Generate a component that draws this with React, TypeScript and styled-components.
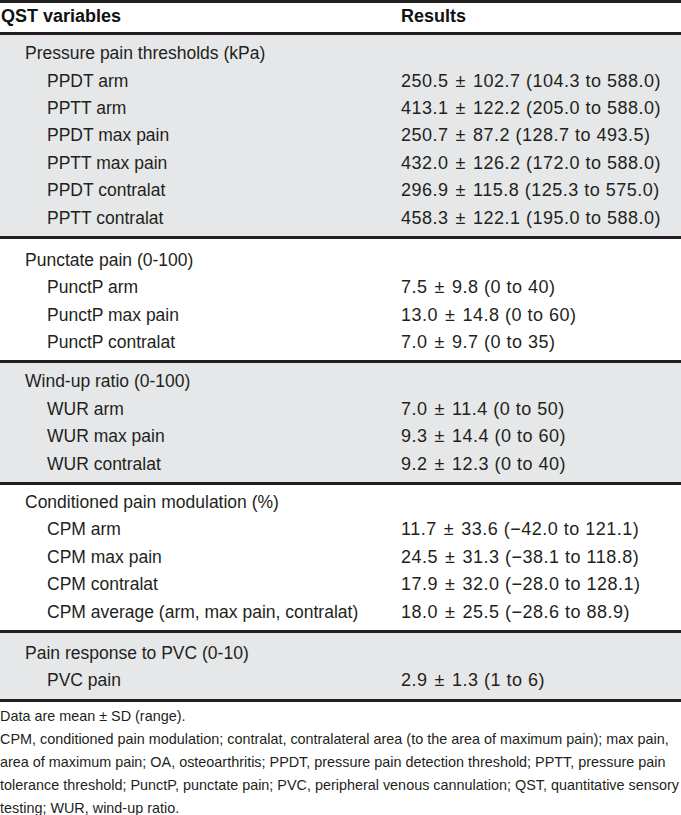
import React from "react";
import styled, { createGlobalStyle } from "styled-components";

const Global = createGlobalStyle`
  html, body { margin: 0; padding: 0; background: #ffffff; }
  body { font-family: "Liberation Sans", Arial, sans-serif; color: #231f20; }
`;

const Page = styled.div`
  width: 681px;
`;

const Table = styled.div`
  display: flex;
  flex-direction: column;
  border-top: 3px solid #231f20;
  border-bottom: 3px solid #231f20;
`;

const HeaderRow = styled.div`
  display: grid;
  grid-template-columns: 401px 1fr;
  height: 27px;
  padding-bottom: 2px;
  align-items: center;
  border-bottom: 3px solid #231f20;
  font-weight: 700;
  font-size: 18px;
  color: #111;
`;

const HeadCell = styled.div<{ $indent?: number }>`
  padding-left: ${(p) => p.$indent ?? 0}px;
  white-space: nowrap;
`;

const Group = styled.div<{ $shaded: boolean; $last?: boolean; $padTop: number }>`
  background: ${(p) => (p.$shaded ? "#e6e7e8" : "#ffffff")};
  padding: ${(p) => p.$padTop}px 0 4px;
  border-bottom: ${(p) => (p.$last ? "none" : "3px solid #231f20")};
`;

const Row = styled.div`
  display: grid;
  grid-template-columns: 401px 1fr;
  height: 27.4px;
  align-items: center;
`;

const Label = styled.div<{ $level: number }>`
  padding-left: ${(p) => (p.$level === 0 ? 25 : 47)}px;
  font-size: 17.5px;
  white-space: nowrap;
`;

const Value = styled.div`
  font-size: 18px;
  letter-spacing: 0.5px;
  white-space: nowrap;
`;

const PlusMinus = styled.span`
  margin: 0 1.5px;
`;

const Notes = styled.div`
  padding-top: 3px;
  font-size: 14.4px;
  line-height: 23px;
  white-space: nowrap;
`;

type Item = { label: string; mean: string; rest: string };
type G = { title: string; items: Item[]; padTop: number };

const groups: G[] = [
  {
    title: "Pressure pain thresholds (kPa)",
    padTop: 5,
    items: [
      { label: "PPDT arm", mean: "250.5", rest: "102.7 (104.3 to 588.0)" },
      { label: "PPTT arm", mean: "413.1", rest: "122.2 (205.0 to 588.0)" },
      { label: "PPDT max pain", mean: "250.7", rest: "87.2 (128.7 to 493.5)" },
      { label: "PPTT max pain", mean: "432.0", rest: "126.2 (172.0 to 588.0)" },
      { label: "PPDT contralat", mean: "296.9", rest: "115.8 (125.3 to 575.0)" },
      { label: "PPTT contralat", mean: "458.3", rest: "122.1 (195.0 to 588.0)" },
    ],
  },
  {
    title: "Punctate pain (0-100)",
    padTop: 8,
    items: [
      { label: "PunctP arm", mean: "7.5", rest: "9.8 (0 to 40)" },
      { label: "PunctP max pain", mean: "13.0", rest: "14.8 (0 to 60)" },
      { label: "PunctP contralat", mean: "7.0", rest: "9.7 (0 to 35)" },
    ],
  },
  {
    title: "Wind-up ratio (0-100)",
    padTop: 5,
    items: [
      { label: "WUR arm", mean: "7.0", rest: "11.4 (0 to 50)" },
      { label: "WUR max pain", mean: "9.3", rest: "14.4 (0 to 60)" },
      { label: "WUR contralat", mean: "9.2", rest: "12.3 (0 to 40)" },
    ],
  },
  {
    title: "Conditioned pain modulation (%)",
    padTop: 4,
    items: [
      { label: "CPM arm", mean: "11.7", rest: "33.6 (−42.0 to 121.1)" },
      { label: "CPM max pain", mean: "24.5", rest: "31.3 (−38.1 to 118.8)" },
      { label: "CPM contralat", mean: "17.9", rest: "32.0 (−28.0 to 128.1)" },
      { label: "CPM average (arm, max pain, contralat)", mean: "18.0", rest: "25.5 (−28.6 to 88.9)" },
    ],
  },
  {
    title: "Pain response to PVC (0-10)",
    padTop: 7,
    items: [{ label: "PVC pain", mean: "2.9", rest: "1.3 (1 to 6)" }],
  },
];

export default function App() {
  return (
    <Page>
      <Global />
      <Table>
        <HeaderRow>
          <HeadCell $indent={1}>QST variables</HeadCell>
          <HeadCell>Results</HeadCell>
        </HeaderRow>
        {groups.map((g, i) => (
          <Group
            key={g.title}
            $shaded={i % 2 === 0}
            $last={i === groups.length - 1}
            $padTop={g.padTop}
          >
            <Row>
              <Label $level={0}>{g.title}</Label>
              <Value />
            </Row>
            {g.items.map((it) => (
              <Row key={it.label}>
                <Label $level={1}>{it.label}</Label>
                <Value>
                  {it.mean} <PlusMinus>±</PlusMinus> {it.rest}
                </Value>
              </Row>
            ))}
          </Group>
        ))}
      </Table>
      <Notes>
        Data are mean ± SD (range).
        <br />
        CPM, conditioned pain modulation; contralat, contralateral area (to the area of maximum pain); max pain,
        <br />
        area of maximum pain; OA, osteoarthritis; PPDT, pressure pain detection threshold; PPTT, pressure pain
        <br />
        tolerance threshold; PunctP, punctate pain; PVC, peripheral venous cannulation; QST, quantitative sensory
        <br />
        testing; WUR, wind-up ratio.
      </Notes>
    </Page>
  );
}
